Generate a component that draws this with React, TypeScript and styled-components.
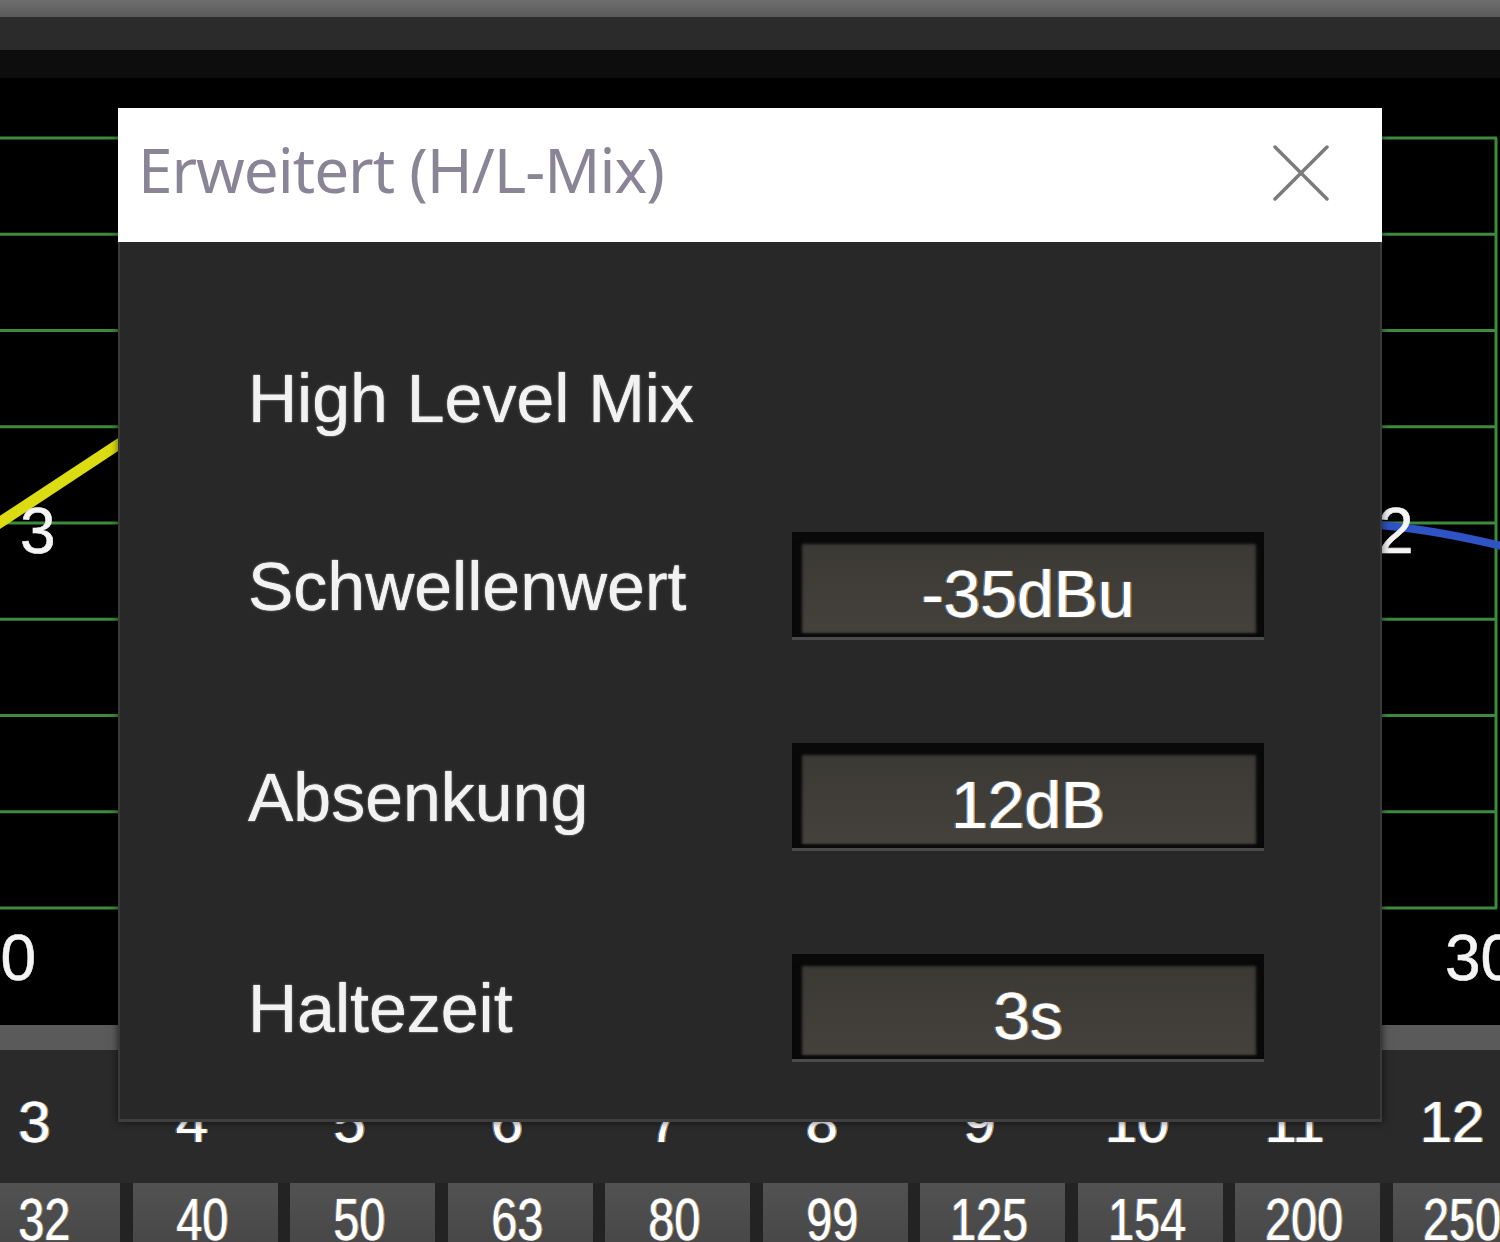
import React from 'react'
import styled, { createGlobalStyle } from 'styled-components'

const GlobalStyle = createGlobalStyle`
  html, body {
    margin: 0;
    padding: 0;
    background: #000;
  }
  * {
    box-sizing: border-box;
  }
`

const frequencies = ['32', '40', '50', '63', '80', '99', '125', '154', '200', '250']
const channels = ['3', '4', '5', '6', '7', '8', '9', '10', '11', '12']

const settings = [
  { label: 'Schwellenwert', value: '-35dBu' },
  { label: 'Absenkung', value: '12dB' },
  { label: 'Haltezeit', value: '3s' }
]

// grid lines of the curve display, in graph coordinates
const gridLines = Array.from({ length: 9 }, (_, i) => 60 + i * 96.25)

const fringe = '-1.5px 0 rgba(70, 150, 255, 0.75), 1.5px 0 rgba(255, 165, 60, 0.75), 0 0 1px #fff'
const glow = '0 0 1px #fff, 0 0 3px rgba(255, 255, 255, 0.3)'

const App = () => {
  return (
    <>
      <GlobalStyle />
      <Page>
        <TopStrip />
        <MenuBar />
        <ToolBar />
        <Graph>
          <svg width='1500' height='947' viewBox='0 0 1500 947'>
            {gridLines.map((y) => (
              <line key={y} x1='0' y1={y} x2='1497' y2={y} stroke='#3d8c3d' strokeWidth='3' />
            ))}
            <line x1='1496' y1='60' x2='1496' y2='830' stroke='#3d8c3d' strokeWidth='3' />
            <line x1='-10' y1='451' x2='125' y2='362' stroke='#dcdc12' strokeWidth='11' />
            <path d='M1378 447 Q1430 451 1502 468' stroke='#2f52c4' strokeWidth='8' fill='none' />
            <GraphLabel x='20' y='475'>3</GraphLabel>
            <GraphLabel x='1378' y='475'>2</GraphLabel>
            <GraphLabel x='36' y='902' textAnchor='end'>10</GraphLabel>
            <GraphLabel x='1445' y='902'>30</GraphLabel>
          </svg>
        </Graph>
        <ScrollTrack />
        <ChannelRow>
          {channels.map((c) => (
            <ChannelNumber key={c}>{c}</ChannelNumber>
          ))}
        </ChannelRow>
        <FrequencyRow>
          {frequencies.map((f) => (
            <FrequencyCell key={f}>
              <FrequencyText>{f}</FrequencyText>
            </FrequencyCell>
          ))}
        </FrequencyRow>

        <Dialog>
          <TitleBar>
            <Title>Erweitert (H/L-Mix)</Title>
            <CloseButton aria-label='close'>
              <svg width='56' height='56' viewBox='0 0 56 56'>
                <path d='M2 2 L54 54 M54 2 L2 54' stroke='#7b7b7b' strokeWidth='3.5' strokeLinecap='round' />
              </svg>
            </CloseButton>
          </TitleBar>
          <DialogBody>
            <Heading>High Level Mix</Heading>
            <Rows>
              {settings.map((s) => (
                <SettingRow key={s.label}>
                  <SettingLabel>{s.label}</SettingLabel>
                  <ValueBox>{s.value}</ValueBox>
                </SettingRow>
              ))}
            </Rows>
          </DialogBody>
        </Dialog>
      </Page>
    </>
  )
}

export default App

const Page = styled.div`
  position: relative;
  width: 1500px;
  height: 1242px;
  overflow: hidden;
  background: #000;
  display: flex;
  flex-direction: column;
  font-family: 'Liberation Sans', Arial, sans-serif;
`

const TopStrip = styled.div`
  height: 17px;
  flex-shrink: 0;
  background: linear-gradient(#6e6e6e, #5a5a5a);
`

const MenuBar = styled.div`
  height: 33px;
  flex-shrink: 0;
  background: #2b2b2b;
`

const ToolBar = styled.div`
  height: 28px;
  flex-shrink: 0;
  background: #0d0d0d;
`

const Graph = styled.div`
  height: 947px;
  flex-shrink: 0;
  background: #000;
  svg {
    display: block;
  }
`

const GraphLabel = styled.text`
  font-family: 'Liberation Sans', Arial, sans-serif;
  font-size: 64px;
  fill: #f4f4f4;
  stroke: #f4f4f4;
  stroke-width: 0.6px;
`

const ScrollTrack = styled.div`
  height: 25px;
  flex-shrink: 0;
  background: #5a5a5a;
`

const ChannelRow = styled.div`
  height: 133px;
  flex-shrink: 0;
  background: #2a2a2a;
  display: grid;
  grid-template-columns: repeat(10, 145px);
  column-gap: 12.5px;
  margin-left: -25px;
  padding-top: 43px;
`

const ChannelNumber = styled.div`
  padding-right: 26px;
  text-align: center;
  font-size: 58px;
  line-height: 1;
  color: #fff;
  text-shadow: ${fringe};
`

const FrequencyRow = styled.div`
  flex: 1;
  background: #232323;
  display: grid;
  grid-template-columns: repeat(10, 145px);
  column-gap: 12.5px;
  margin-left: -25px;
`

const FrequencyCell = styled.div`
  background: linear-gradient(#525252, #464646);
  display: flex;
  justify-content: center;
  padding: 7px 6px 0 0;
`

const FrequencyText = styled.span`
  display: inline-block;
  font-size: 60px;
  line-height: 1;
  color: #fff;
  transform: scaleX(0.78);
  text-shadow: ${fringe};
`

const Dialog = styled.div`
  position: absolute;
  left: 118px;
  top: 108px;
  width: 1264px;
  height: 1014px;
  display: flex;
  flex-direction: column;
  background: #282828;
  border-left: 2px solid #3a3a3a;
  border-right: 2px solid #3a3a3a;
  border-bottom: 3px solid #3f3f3f;
  box-shadow: 0 0 8px rgba(0, 0, 0, 0.6);
`

const TitleBar = styled.div`
  height: 134px;
  flex-shrink: 0;
  background: #fff;
  margin: 0 -2px;
  display: flex;
  align-items: center;
  justify-content: space-between;
  padding: 0 53px 0 20px;
`

const Title = styled.div`
  font-family: 'Noto Sans', 'Open Sans', sans-serif;
  font-size: 62px;
  line-height: 1;
  color: #8a8497;
  padding-bottom: 12px;
  letter-spacing: -1px;
`

const CloseButton = styled.div`
  width: 56px;
  height: 56px;
  margin-bottom: 4px;
  svg {
    display: block;
  }
`

const DialogBody = styled.div`
  flex: 1;
  display: flex;
  flex-direction: column;
  padding: 122px 0 0 128px;
`

const Heading = styled.div`
  font-size: 68px;
  line-height: 1;
  color: #f2f2f2;
  text-shadow: ${glow};
  margin-bottom: 100px;
`

const Rows = styled.div`
  display: flex;
  flex-direction: column;
  gap: 103px;
`

const SettingRow = styled.div`
  display: flex;
  align-items: center;
  height: 108px;
`

const SettingLabel = styled.div`
  width: 544px;
  font-size: 68px;
  line-height: 1;
  color: #f2f2f2;
  text-shadow: ${glow};
`

const ValueBox = styled.div`
  width: 472px;
  height: 108px;
  display: flex;
  align-items: center;
  justify-content: center;
  padding-top: 18px;
  font-size: 66px;
  line-height: 1;
  color: #fff;
  text-shadow: ${fringe};
  background: linear-gradient(#3a3834, #45423c);
  border-bottom: 3px solid #4b4b4b;
  box-shadow:
    inset 0 13px 3px -1px #090909,
    inset 11px 0 3px -1px #090909,
    inset -9px 0 3px -1px #090909,
    inset 0 -5px 2px -1px #0c0c0c;
`
